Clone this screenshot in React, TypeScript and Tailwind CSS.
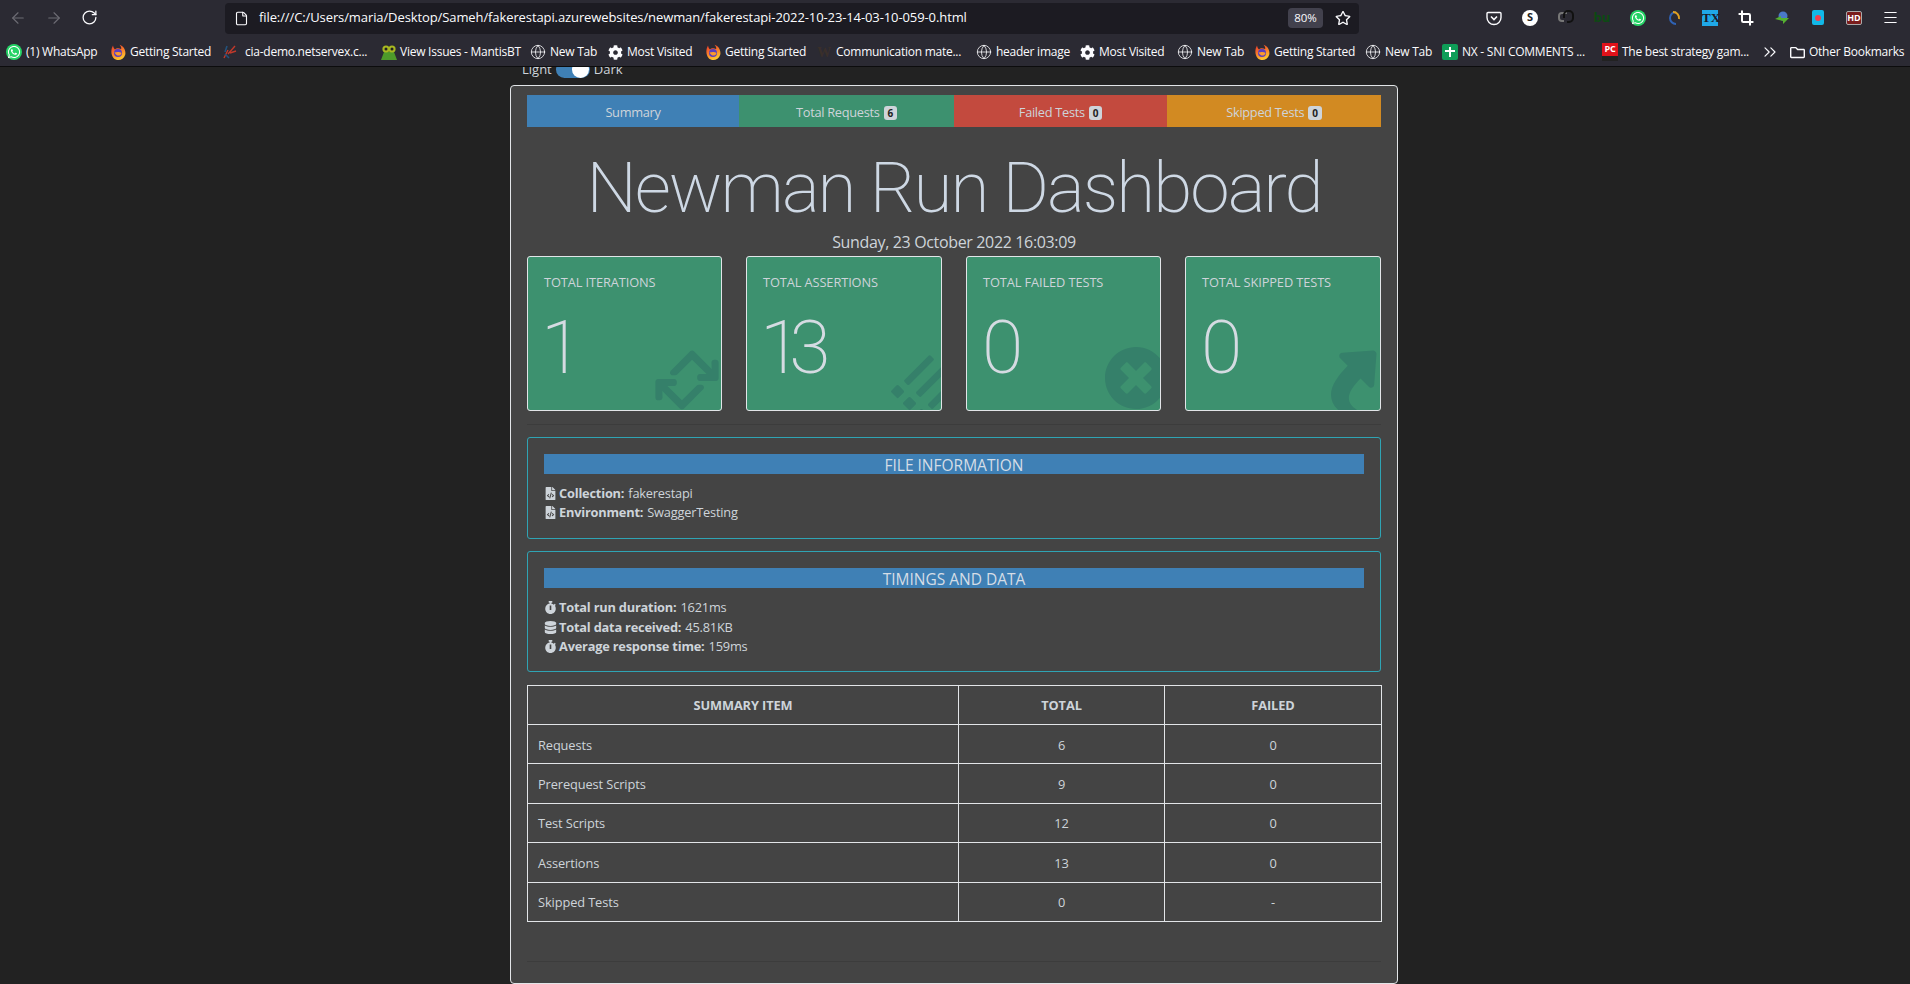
import React from "react";
import { FaWhatsapp, FaCog, FaRetweet, FaList, FaTimesCircle, FaShare, FaFileCode, FaStopwatch, FaDatabase, FaRegStar, FaRegFolder } from "react-icons/fa";
import { ArrowLeft, ArrowRight, RotateCw, File, Globe, ChevronsRight, Crop, Menu } from "lucide-react";

const Firefox = () => (
  <svg width="16" height="17" viewBox="0 0 16 17" className="shrink-0">
    <defs>
      <linearGradient id="ff" x1="0" y1="0" x2="0.4" y2="1">
        <stop offset="0" stopColor="#e8352c" />
        <stop offset="0.5" stopColor="#f9742a" />
        <stop offset="1" stopColor="#fdc32d" />
      </linearGradient>
    </defs>
    <path d="M3 1.5 C1 5 0.5 10 3.5 14 C7 17.5 13.5 16.5 15.3 10.5 C16 6 13.5 2 9.5 0.8 C11.5 3 11.5 4.5 11 5 C9 3.8 6 4 5 5.5 C4 4.5 3.2 3 3 1.5Z" fill="url(#ff)" />
    <circle cx="8" cy="9" r="4" fill="#5a3fc0" />
    <path d="M4.5 8.5 C7 7.6 10 7.8 11.6 9 C10.6 12.4 6.4 12.6 4.5 8.5Z" fill="#fb9a2e" />
  </svg>
);

const GlobeIcon = () => <Globe size={16} strokeWidth={1.2} className="shrink-0 text-[#fbfbfe]" />;
const Gear = () => <FaCog size={15} className="shrink-0 text-[#fbfbfe]" />;

const bookmarks: { w: string; icon: React.ReactNode; label: string }[] = [
  { w: "w-[104px]", label: "(1) WhatsApp", icon: <span className="w-4 h-4 rounded-full bg-[#25d366] flex items-center justify-center shrink-0"><FaWhatsapp size={14} className="text-white" /></span> },
  { w: "w-[112px]", label: "Getting Started", icon: <Firefox /> },
  { w: "w-[159px]", label: "cia-demo.netservex.c...", icon: (
    <svg width="16" height="16" viewBox="0 0 16 16" className="shrink-0 mr-[3px]"><path d="M2 14 L6 6 M6 10 L13 2 M8 9 L14 7" stroke="#c0392b" strokeWidth="1.4" fill="none" /><path d="M3 8 L5 2 M3 10 L7 14" stroke="#23527c" strokeWidth="1.6" fill="none" /></svg>
  ) },
  { w: "w-[149px]", label: "View Issues - MantisBT", icon: (
    <svg width="18" height="18" viewBox="0 0 18 18" className="shrink-0 -ml-[1px] -mr-[2px]"><path d="M1 17 L4 9 L14 9 L17 17Z" fill="#4e9a2a" /><circle cx="6" cy="6" r="3.6" fill="#a8b820" /><circle cx="12" cy="6" r="3.6" fill="#a8b820" /><circle cx="6" cy="6" r="1.5" fill="#222" /><circle cx="12" cy="6" r="1.5" fill="#222" /></svg>
  ) },
  { w: "w-[78px]", label: "New Tab", icon: <GlobeIcon /> },
  { w: "w-[97px]", label: "Most Visited", icon: <Gear /> },
  { w: "w-[111px]", label: "Getting Started", icon: <Firefox /> },
  { w: "w-[160px]", label: "Communication mate...", icon: <span className="w-4 h-4 shrink-0 flex items-center justify-center text-[14px] font-bold text-[#3a2f2a] [font-family:'Liberation_Serif',serif]">W</span> },
  { w: "w-[104px]", label: "header image", icon: <GlobeIcon /> },
  { w: "w-[97px]", label: "Most Visited", icon: <Gear /> },
  { w: "w-[77px]", label: "New Tab", icon: <GlobeIcon /> },
  { w: "w-[111px]", label: "Getting Started", icon: <Firefox /> },
  { w: "w-[77px]", label: "New Tab", icon: <GlobeIcon /> },
  { w: "w-[160px]", label: "NX - SNI COMMENTS ...", icon: (
    <span className="w-4 h-4 rounded-[2px] bg-[#0f9d58] relative shrink-0"><span className="absolute left-[7px] top-[3px] w-[2px] h-[10px] bg-white" /><span className="absolute left-[3px] top-[6px] w-[10px] h-[2px] bg-white" /></span>
  ) },
  { w: "w-[159px]", label: "The best strategy gam...", icon: (
    <span className="w-4 h-[18px] bg-[#e0121a] shrink-0 flex items-start justify-center text-[9px] leading-[12px] font-bold text-white border-b-[5px] border-[#222]">PC</span>
  ) },
];

const tabs = [
  { label: "Summary", bg: "bg-[#3f80b5]", w: "w-[212px]" },
  { label: "Total Requests", badge: "6", bg: "bg-[#3d916f]", w: "w-[215px]" },
  { label: "Failed Tests", badge: "0", bg: "bg-[#c34a3e]", w: "w-[213px]" },
  { label: "Skipped Tests", badge: "0", bg: "bg-[#d28a22]", w: "w-[214px]" },
];

const cards = [
  { title: "TOTAL ITERATIONS", value: "1", w: "w-[195px]", ml: "-ml-[3px]", icon: <FaRetweet className="absolute right-[-2px] bottom-[-6px] text-[72px] text-[#35806a] -rotate-45" /> },
  { title: "TOTAL ASSERTIONS", value: "13", w: "w-[196px]", ml: "-ml-[3px]", icon: <FaList className="absolute right-[-11px] bottom-[-5px] text-[54px] text-[#35806a] -rotate-45" /> },
  { title: "TOTAL FAILED TESTS", value: "0", w: "w-[195px]", ml: "-ml-[1px]", icon: <FaTimesCircle className="absolute right-[-8px] bottom-0 text-[64px] text-[#35806a]" /> },
  { title: "TOTAL SKIPPED TESTS", value: "0", w: "w-[196px]", ml: "-ml-[1px]", icon: <FaShare className="absolute right-[-10px] bottom-[-4px] text-[68px] text-[#35806a] -rotate-45" /> },
];

const rows = [
  ["Requests", "6", "0"],
  ["Prerequest Scripts", "9", "0"],
  ["Test Scripts", "12", "0"],
  ["Assertions", "13", "0"],
  ["Skipped Tests", "0", "-"],
];

function Ext({ children }: { children: React.ReactNode }) {
  return <span className="w-9 h-5 flex items-center justify-center">{children}</span>;
}

function Info({ icon, label, value }: { icon: React.ReactNode; label: string; value: string }) {
  return (
    <div className="flex items-center h-[19.5px] tracking-[-0.2px]">
      <span className="w-[15px] flex items-center shrink-0">{icon}</span>
      <b className="font-bold mr-1">{label}</b>
      <span>{value}</span>
    </div>
  );
}

export default function App() {
  return (
    <div className="h-[984px] w-[1910px] overflow-hidden flex flex-col bg-[#222222] text-[#ced4da] [font-family:'Open_Sans',sans-serif]">
      <header className="h-[67px] shrink-0 bg-[#2b2a33] border-b border-[#0c0c0d] text-[#fbfbfe] flex flex-col">
        <div className="h-[35px] flex items-center shrink-0">
          <div className="w-[225px] flex items-center pl-[9px] gap-[18px] shrink-0">
            <ArrowLeft size={18} strokeWidth={1.5} className="text-[#6d6c74]" />
            <ArrowRight size={18} strokeWidth={1.5} className="text-[#6d6c74]" />
            <RotateCw size={17} strokeWidth={1.8} className="text-[#fbfbfe]" />
          </div>
          <div className="w-[1134px] h-[31px] mt-[1px] bg-[#1c1b22] rounded-[4px] flex items-center shrink-0 pl-[9px] pr-[5px]">
            <File size={15} strokeWidth={1.8} className="shrink-0 mr-[10px]" />
            <span className="text-[13px] whitespace-nowrap tracking-[-0.1px]">file:///C:/Users/maria/Desktop/Sameh/fakerestapi.azurewebsites/newman/fakerestapi-2022-10-23-14-03-10-059-0.html</span>
            <span className="ml-auto w-[35px] h-5 rounded-[4px] bg-[#42414d] text-[11.5px] flex items-center justify-center">80%</span>
            <FaRegStar size={16} className="ml-[12px] mr-[3px]" />
          </div>
          <div className="flex items-center pl-[117px]">
            <Ext><svg width="16" height="16" viewBox="0 0 16 16"><path d="M2 2.5h12a1 1 0 0 1 1 1v4a7 7 0 0 1-14 0v-4a1 1 0 0 1 1-1Z" fill="none" stroke="#fbfbfe" strokeWidth="1.4" /><path d="M5 6.5l3 3 3-3" fill="none" stroke="#fbfbfe" strokeWidth="1.6" /></svg></Ext>
            <Ext><span className="w-4 h-4 rounded-full bg-white text-[#222] text-[11px] font-bold flex items-center justify-center">S</span></Ext>
            <Ext><svg width="16" height="18" viewBox="0 0 16 18"><path d="M6 12H4a3 3 0 0 1-3-3V7a3 3 0 0 1 3-3h5" fill="none" stroke="#777" strokeWidth="2" /><path d="M6 9V6a4 4 0 0 1 4-4h1a4 4 0 0 1 4 4v3a4 4 0 0 1-4 4H9" fill="none" stroke="#111" strokeWidth="2" /></svg></Ext>
            <Ext><span className="text-[13px] font-bold text-[#0b4a12]">bu</span></Ext>
            <Ext><span className="w-4 h-4 rounded-full bg-[#25d366] flex items-center justify-center"><FaWhatsapp size={14} className="text-white" /></span></Ext>
            <Ext><svg width="14" height="16" viewBox="0 0 14 16"><path d="M9 2a6 6 0 1 0 0 12" fill="none" stroke="#2f62b5" strokeWidth="2" /><path d="M6 2a6 6 0 0 1 6 7" fill="none" stroke="#e0a020" strokeWidth="2" /></svg></Ext>
            <Ext><span className="w-4 h-4 bg-[#1fa8e8] text-[#1a1a2a] text-[13px] leading-4 font-bold text-center [font-family:'Liberation_Serif',serif]">TX</span></Ext>
            <Ext><Crop size={16} strokeWidth={3} className="text-white" /></Ext>
            <Ext><svg width="16" height="16" viewBox="0 0 16 16"><circle cx="9" cy="6" r="4.5" fill="#4a78c8" /><path d="M1 9l6-3v2h8L9 14v-3Z" fill="#55b030" /></svg></Ext>
            <Ext><span className="w-3 h-[15px] rounded-[2px] bg-[#12b8e8] flex items-center justify-center"><span className="w-[6px] h-[6px] rounded-full bg-[#f04050]" /></span></Ext>
            <Ext><span className="w-4 h-[14px] rounded-[2px] bg-[#7a1c1c] border border-[#aaa] text-white text-[9px] leading-3 font-bold text-center">HD</span></Ext>
            <Ext><Menu size={17} strokeWidth={1.6} /></Ext>
          </div>
        </div>
        <div className="flex-1 flex items-center pl-[6px] pt-[3px] text-[12px] whitespace-nowrap tracking-[-0.25px]">
          {bookmarks.map((b, i) => (
            <div key={i} className={`${b.w} flex items-center gap-[4px] shrink-0`}>
              {b.icon}
              <span>{b.label}</span>
            </div>
          ))}
          <ChevronsRight size={20} strokeWidth={1.4} className="shrink-0 mr-[10px] -ml-[1px]" />
          <FaRegFolder size={15} className="shrink-0 mr-[4px]" />
          <span>Other Bookmarks</span>
        </div>
      </header>

      <main className="flex-1 overflow-hidden flex flex-col items-center pr-[2px] text-[12.8px]">
        <div className="w-[888px] pl-[12px] h-[19px] -mt-[7px] shrink-0 flex items-center gap-[4px] text-[13px] leading-none">
          <span>Light</span>
          <span className="w-[34px] h-[17px] rounded-full bg-[#3f80b5] relative shrink-0"><span className="absolute right-[1px] top-0 w-[17px] h-[17px] rounded-full bg-white" /></span>
          <span>Dark</span>
        </div>
        <section className="w-[888px] mt-[6px] border border-[#e2e5e8] rounded-[4px] bg-[#444444] px-[16px] pt-[9px] grow shrink-0">
          <nav className="flex h-[32px]">
            {tabs.map((t) => (
              <div key={t.label} className={`${t.w} ${t.bg} flex items-center justify-center gap-[4px] tracking-[-0.3px] pt-[3px]`}>
                <span>{t.label}</span>
                {t.badge && <span className="bg-[#ced4da] text-[#222] rounded-[3px] px-[4px] text-[10px] leading-[14px] font-bold">{t.badge}</span>}
              </div>
            ))}
          </nav>
          <h1 className="text-center text-[71px] font-extralight tracking-[-2px] leading-none text-[#ced8e4] mt-[25px] [font-family:'Roboto',sans-serif]">Newman Run Dashboard</h1>
          <p className="text-center text-[16px] leading-[20px] mt-[9px] tracking-[-0.35px]">Sunday, 23 October 2022 16:03:09</p>
          <div className="flex justify-between mt-[4px]">
            {cards.map((c) => (
              <div key={c.title} className={`${c.w} h-[155px] relative overflow-hidden rounded-[3px] border border-[#e2e5e8] bg-[#3d916f] pl-[16px] pt-[16px]`}>
                <div className="text-[12.8px] leading-[18px] tracking-[-0.1px]">{c.title}</div>
                <div className={`${c.ml} text-[75px] font-extralight tracking-[-12px] leading-none mt-[19px] text-[#d5dbe2] [font-family:'Roboto',sans-serif]`}>{c.value}</div>
                {c.icon}
              </div>
            ))}
          </div>
          <div className="mt-[13px] h-px bg-[#3c3c3c]" />
          <div className="mt-[12px] h-[102px] border border-[#2fa4b4] rounded-[3px] px-[16px] pt-[16px]">
            <div className="h-[20px] bg-[#3f80b5] text-center text-[15.5px] leading-[22px] text-[#d5dde6]">FILE INFORMATION</div>
            <div className="mt-[9.6px]">
              <Info icon={<FaFileCode size={13} />} label="Collection:" value="fakerestapi" />
              <Info icon={<FaFileCode size={13} />} label="Environment:" value="SwaggerTesting" />
            </div>
          </div>
          <div className="mt-[12px] h-[121px] border border-[#2fa4b4] rounded-[3px] px-[16px] pt-[16px]">
            <div className="h-[20px] bg-[#3f80b5] text-center text-[15.5px] leading-[22px] text-[#d5dde6]">TIMINGS AND DATA</div>
            <div className="mt-[10px]">
              <Info icon={<FaStopwatch size={13} />} label="Total run duration:" value="1621ms" />
              <Info icon={<FaDatabase size={13} />} label="Total data received:" value="45.81KB" />
              <Info icon={<FaStopwatch size={13} />} label="Average response time:" value="159ms" />
            </div>
          </div>
          <table className="mt-[13px] w-[854px] table-fixed border-collapse tracking-[-0.1px]">
            <colgroup>
              <col className="w-[431px]" />
              <col className="w-[206px]" />
              <col className="w-[217px]" />
            </colgroup>
            <thead>
              <tr className="h-[39px]">
                <th className="border border-[#e2e5e8] font-bold pt-[1px]">SUMMARY ITEM</th>
                <th className="border border-[#e2e5e8] font-bold pt-[1px]">TOTAL</th>
                <th className="border border-[#e2e5e8] font-bold pt-[1px]">FAILED</th>
              </tr>
            </thead>
            <tbody>
              {rows.map((r) => (
                <tr key={r[0]} className="h-[39.4px]">
                  <td className="border border-[#e2e5e8] pl-[10px] pt-[2px]">{r[0]}</td>
                  <td className="border border-[#e2e5e8] text-center pt-[2px]">{r[1]}</td>
                  <td className="border border-[#e2e5e8] text-center pt-[2px]">{r[2]}</td>
                </tr>
              ))}
            </tbody>
          </table>
          <div className="mt-[39px] h-px bg-[#3c3c3c]" />
        </section>
      </main>
    </div>
  );
}
